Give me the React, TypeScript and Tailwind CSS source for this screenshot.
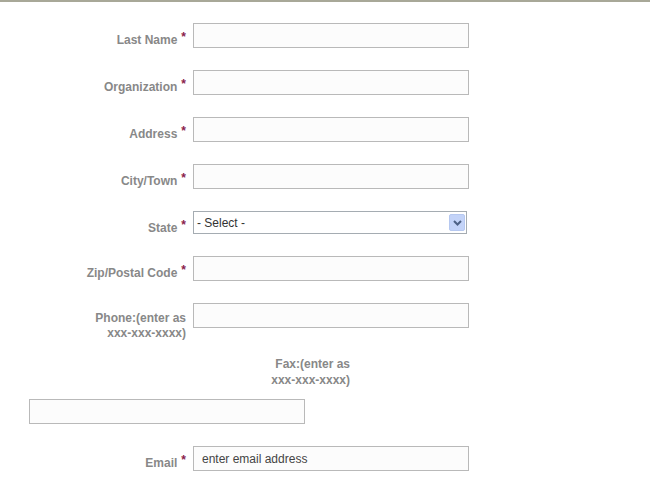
import React from "react";

const font = { fontFamily: '"Liberation Sans", Arial, sans-serif' };

function Star() {
  return <span className="ml-[4px] relative -top-[3px] text-[12px] text-[#8b1c4c]">*</span>;
}

function Row({ label, required = true, children, mb = "mb-[22px]", pt = "pt-[10px]" }: { label: React.ReactNode; required?: boolean; children: React.ReactNode; mb?: string; pt?: string }) {
  return (
    <div className={`flex items-start ${mb}`}>
      <div className={`w-[186px] ${pt} text-right text-[12px] font-bold leading-[15px] text-[#888]`}>
        {label}
        {required && <Star />}
      </div>
      <div className="ml-[7px]">{children}</div>
    </div>
  );
}

function TextBox({ value = "", w = "w-[276px]" }: { value?: string; w?: string }) {
  return (
    <input
      readOnly
      defaultValue={value}
      className={`block h-[25px] ${w} border border-[#b9b9b9] bg-[#fcfcfc] pl-[8px] text-[12px] text-[#444] outline-none`}
      style={font}
    />
  );
}

function StateSelect() {
  return (
    <div className="flex h-[23px] w-[274px] items-center border border-[#a5acb2] bg-white">
      <span className="flex-1 pl-[3px] text-[12px] text-[#333]">- Select -</span>
      <span className="mr-[1px] flex h-[17px] w-[16px] items-center justify-center rounded-[2px] border border-[#b6c8f0] bg-[#c3d3f8]">
        <svg width="9" height="6" viewBox="0 0 9 6">
          <path d="M1 1 L4.5 4.5 L8 1" fill="none" stroke="#4d6185" strokeWidth="2" />
        </svg>
      </span>
    </div>
  );
}

export default function App() {
  return (
    <div className="min-h-[482px] w-[650px] bg-white" style={font}>
      <div className="h-[2px] bg-[#a8a898]" />
      <div className="pt-[21px]">
        <Row label="Last Name"><TextBox /></Row>
        <Row label="Organization"><TextBox /></Row>
        <Row label="Address"><TextBox /></Row>
        <Row label="City/Town"><TextBox /></Row>
        <Row label="State" mb="mb-[20px]"><StateSelect /></Row>
        <Row label="Zip/Postal Code"><TextBox /></Row>
        <Row label={<>Phone:(enter as<br />xxx-xxx-xxxx)</>} required={false} mb="mb-[15px]" pt="pt-[8px]"><TextBox /></Row>
        <div className="w-[350px] text-right text-[12px] font-bold leading-[16px] text-[#888]">
          Fax:(enter as<br />xxx-xxx-xxxx)
        </div>
        <div className="ml-[29px] mt-[11px] mb-[22px]">
          <TextBox />
        </div>
        <Row label="Email"><TextBox value="enter email address" /></Row>
      </div>
    </div>
  );
}
